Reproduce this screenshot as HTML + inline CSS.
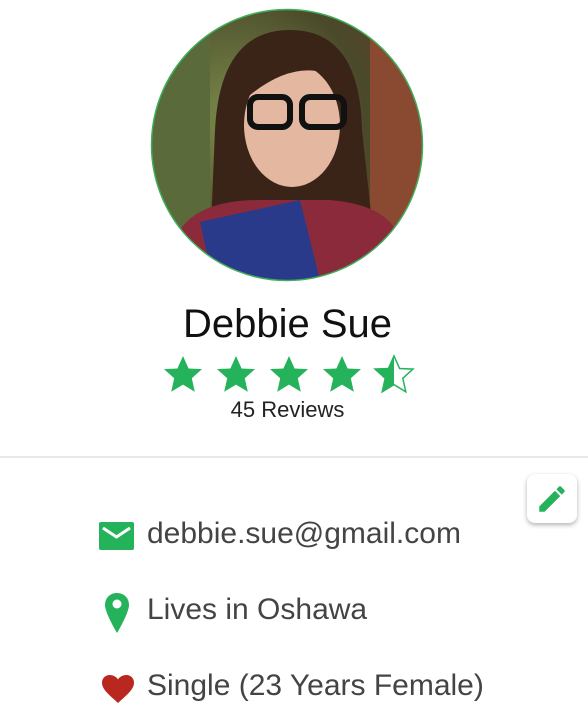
<!DOCTYPE html>
<html><head><style>
body{margin:0;width:588px;height:726px;background:#fff;position:relative;overflow:hidden;font-family:"Liberation Sans",sans-serif}
.abs{position:absolute}
.row{position:absolute;left:147px;font-size:30px;color:#444;line-height:32px}
</style></head><body>
<svg class="abs" style="left:0;top:0" width="588" height="300">
<defs>
<clipPath id="c"><circle cx="287" cy="145" r="135"/></clipPath>
<radialGradient id="bg" cx="0.3" cy="0.4" r="0.8"><stop offset="0" stop-color="#7a8a4a"/><stop offset="0.6" stop-color="#4a4a2a"/><stop offset="1" stop-color="#6a3a2a"/></radialGradient>
</defs>
<g clip-path="url(#c)">
<rect x="150" y="8" width="276" height="276" fill="url(#bg)"/>
<rect x="150" y="8" width="60" height="276" fill="#5a6a3a"/>
<rect x="370" y="8" width="56" height="276" fill="#8a4a32"/>
<path d="M215 130 Q220 30 290 30 Q360 30 362 130 L375 250 L210 250 Z" fill="#3a2418"/>
<ellipse cx="292" cy="125" rx="48" ry="62" fill="#e4b8a0"/>
<path d="M244 90 Q260 40 300 45 Q340 50 345 100 L340 80 Q300 55 250 95 Z" fill="#3a2418"/>
<rect x="250" y="97" width="40" height="30" rx="8" fill="none" stroke="#111" stroke-width="6"/>
<rect x="302" y="97" width="42" height="30" rx="8" fill="none" stroke="#111" stroke-width="6"/>
<path d="M180 230 Q200 200 260 200 L330 200 Q390 205 400 240 L410 290 L170 290 Z" fill="#8a2a3a"/>
<path d="M200 222 L300 200 L320 280 L215 290 Z" fill="#2a3a8a"/>
</g>
<circle cx="287" cy="145" r="135.5" fill="none" stroke="#3fae5a" stroke-width="1.5"/>
</svg>
<div class="abs" style="left:0;width:575px;top:302px;text-align:center;font-size:40px;color:#111">Debbie Sue</div>
<svg class="abs" style="left:160px;top:353px" width="260" height="45">
<defs><linearGradient id="h"><stop offset="0.5" stop-color="#24b35a"/><stop offset="0.5" stop-color="#fff"/></linearGradient>
<path id="s" d="M0-19 L5.6-6.5 L19-5.9 L8.8 3.3 L11.8 16.8 L0 9.6 L-11.8 16.8 L-8.8 3.3 L-19-5.9 L-5.6-6.5 Z"/></defs>
<use href="#s" x="23" y="22" fill="#24b35a"/>
<use href="#s" x="76" y="22" fill="#24b35a"/>
<use href="#s" x="129" y="22" fill="#24b35a"/>
<use href="#s" x="182" y="22" fill="#24b35a"/>
<use href="#s" x="234" y="22" fill="url(#h)" stroke="#24b35a" stroke-width="1.5"/>
</svg>
<div class="abs" style="left:0;width:575px;top:397px;text-align:center;font-size:22px;color:#222">45 Reviews</div>
<div class="abs" style="left:0;top:456px;width:588px;height:2px;background:#e8e8e8"></div>
<div class="abs" style="left:527px;top:474px;width:50px;height:49px;border-radius:8px;background:#fff;box-shadow:0 2px 5px rgba(0,0,0,.3)"></div>
<svg class="abs" style="left:535px;top:482px" width="34" height="34" viewBox="0 0 24 24"><path d="M3 17.25V21h3.75L17.8 9.94l-3.75-3.75L3 17.25zM20.7 7.04a1 1 0 000-1.41l-2.34-2.34a1 1 0 00-1.41 0l-1.83 1.83 3.75 3.75 1.83-1.83z" fill="#24b35a"/></svg>
<svg class="abs" style="left:99px;top:522px" width="35" height="28"><rect width="35" height="28" rx="2" fill="#24b35a"/><path d="M4 6 L17.5 15 L31 6" fill="none" stroke="#fff" stroke-width="3"/></svg>
<div class="row" style="top:518px">debbie.sue@gmail.com</div>
<svg class="abs" style="left:105px;top:593px" width="24" height="40" viewBox="0 0 24 40"><path d="M12 0C5 0 0 5 0 12c0 8 12 28 12 28s12-20 12-28C24 5 19 0 12 0z" fill="#24b35a"/><circle cx="12" cy="11" r="4.5" fill="#fff"/></svg>
<div class="row" style="top:594px">Lives in Oshawa</div>
<svg class="abs" style="left:102px;top:675px" width="32" height="28" viewBox="0 0 24 21"><path d="M12 21l-1.7-1.6C4.2 14 0 10.2 0 5.8 0 2.5 2.5 0 5.8 0 7.9 0 10.7 1.2 12 3.3 13.3 1.2 16.1 0 18.2 0 21.5 0 24 2.5 24 5.8c0 4.4-4.2 8.2-10.3 13.6z" fill="#b8281f"/></svg>
<div class="row" style="top:670px">Single (23 Years Female)</div>
</body></html>
